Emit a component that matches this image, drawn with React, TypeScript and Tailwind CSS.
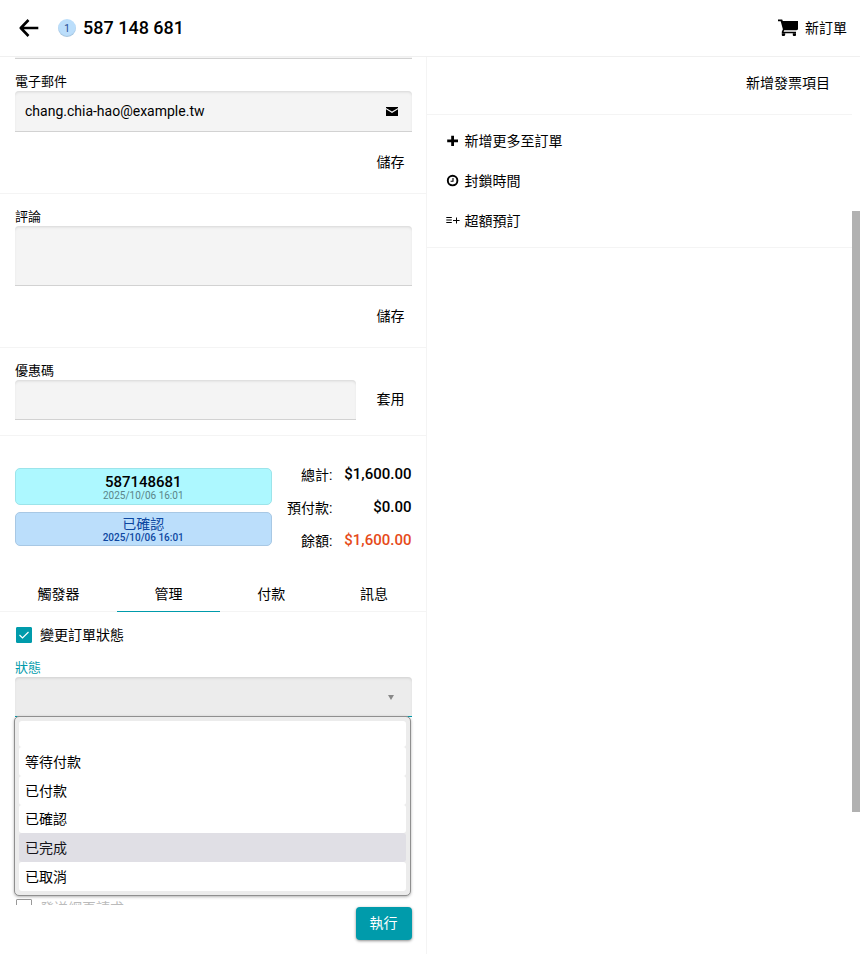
import { useState } from 'react';
import type { ReactNode } from 'react';

const fieldClass =
  'block w-full rounded-t border-b border-[#d2d2d2] bg-[#f4f4f4] px-[10px] text-sm text-black shadow-[inset_0_2px_3px_-1px_rgba(0,0,0,0.12)] outline-none';

const statuses = ['', '等待付款', '已付款', '已確認', '已完成', '已取消'];
const tabs = ['觸發器', '管理', '付款', '訊息'];

function BackIcon() {
  return (
    <svg width="20" height="18" viewBox="0 0 20 18" fill="none" stroke="currentColor" strokeWidth="2.6" aria-hidden="true">
      <path d="M19.3 9H2M9.5 1 1.8 9l7.7 8" strokeLinejoin="round" />
    </svg>
  );
}

function CartIcon() {
  return (
    <svg width="20" height="18" viewBox="0 0 20 18" fill="currentColor" aria-hidden="true">
      <path d="M0 .5h4.2L4.8 2H20v8.6l-1.6.6H6.2l-.6 1.6H18v1.5H3.8v-1.6l1.1-2.4L2.7 2.3H0z" />
      <path d="M3.8 14.3h3.4v1.4L6.5 17H4.4l-.6-.8zM14.8 14.3H18v1.9l-.6.8h-2l-.6-.8z" />
    </svg>
  );
}

function MailIcon() {
  return (
    <svg width="12" height="9" viewBox="0 0 12 9" fill="currentColor" aria-hidden="true">
      <path d="M0 0h12v1L6 4.6 0 1zM0 2.3l6 3.6 6-3.6V9H0z" />
    </svg>
  );
}

function PlusIcon() {
  return (
    <svg width="14" height="14" viewBox="0 0 14 14" fill="currentColor" aria-hidden="true">
      <path d="M5.2 1.7h2.8v3.7h4v2.8H8v3.7H5.2V8.2h-4V5.4h4z" />
    </svg>
  );
}

function ClockIcon() {
  return (
    <svg width="14" height="14" viewBox="0 0 14 14" fill="none" stroke="currentColor" aria-hidden="true">
      <circle cx="6.6" cy="6.6" r="4.8" strokeWidth="1.9" />
      <path d="M7 4v3.2H4.6" strokeWidth="1.1" />
    </svg>
  );
}

function ListPlusIcon() {
  return (
    <svg width="14" height="14" viewBox="0 0 14 14" fill="none" stroke="currentColor" strokeWidth="1" aria-hidden="true">
      <path d="M.3 3.5h5.5M.3 6h5.5M.3 8.5h5.5M7 6.5h6.6M10.5 3.5v6" />
    </svg>
  );
}

function Label({ htmlFor, children, className = '' }: { htmlFor: string; children: ReactNode; className?: string }) {
  return (
    <label htmlFor={htmlFor} className={`block h-5 text-[13px] leading-[22px] ${className}`}>
      {children}
    </label>
  );
}

function TextButton({ children }: { children: ReactNode }) {
  return (
    <button type="button" className="h-8 px-[7px] text-sm">
      {children}
    </button>
  );
}

function Action({ icon, children }: { icon: ReactNode; children: ReactNode }) {
  return (
    <button type="button" className="flex h-10 items-center gap-[5px] text-sm">
      {icon}
      <span>{children}</span>
    </button>
  );
}

function Total({ name, value, className = '' }: { name: string; value: string; className?: string }) {
  return (
    <div className="flex h-[33px] items-center justify-end">
      <dt className="text-sm">{name}:</dt>
      <dd className={`w-[79px] text-right text-[15px] font-medium ${className}`}>{value}</dd>
    </div>
  );
}

function StatusSelect() {
  const [value, setValue] = useState('');
  return (
    <div className="relative">
      <select
        id="status"
        value={value}
        onChange={(e) => setValue(e.target.value)}
        className="block h-10 w-full appearance-none rounded-t border-b border-[#009bab] bg-[#ececec] px-[10px] text-sm shadow-[inset_0_2px_3px_-1px_rgba(0,0,0,0.12)] outline-none"
      >
        {statuses.map((s) => (
          <option key={s} value={s}>
            {s}
          </option>
        ))}
      </select>
      <svg className="pointer-events-none absolute top-[18px] right-[18px]" width="6" height="5" viewBox="0 0 6 5" aria-hidden="true">
        <path d="M0 0h6L3 5z" fill="#888" />
      </svg>
      <ul
        role="listbox"
        aria-label="狀態"
        className="absolute top-[39px] right-px -left-px z-10 rounded-[5px] border border-[#8f8f8f] bg-[#ececec] p-1 text-sm shadow-[0_1px_3px_rgba(0,0,0,0.3)]"
      >
        {statuses.map((s) => (
          <li
            key={s}
            role="option"
            aria-selected={s === value}
            onClick={() => setValue(s)}
            className={`flex items-center rounded-[3px] px-[6px] first:h-[26px] ${s === '已確認' ? 'h-7' : 'h-[29px]'} ${
              s === '已完成' ? 'bg-[#e0dfe5] text-[#15141a]' : 'bg-white'
            }`}
          >
            {s}
          </li>
        ))}
      </ul>
    </div>
  );
}

export default function App() {
  const [note, setNote] = useState('');
  const [change, setChange] = useState(true);
  return (
    <div className="flex min-h-screen flex-col bg-white font-[Roboto,'Noto_Sans_CJK_TC',sans-serif] text-black">
      <header className="flex h-[57px] items-center border-b border-[#f0f0f0] pr-[13px] pl-[19px]">
        <button type="button" aria-label="返回">
          <BackIcon />
        </button>
        <span className="ml-[19px] flex size-[18px] items-center justify-center rounded-full bg-[#bbdefb] text-[10px] text-[#1b4a8f] shadow-[inset_0_-1px_1px_rgba(0,0,0,0.12)]">
          1
        </span>
        <h1 className="ml-[7px] text-lg font-medium">587 148 681</h1>
        <button type="button" className="ml-auto flex items-center gap-[7px] text-sm">
          <CartIcon />
          新訂單
        </button>
      </header>

      <div className="flex flex-1">
        <main className="flex min-w-0 flex-1 flex-col">
          <div className="mr-[14px] ml-[15px] h-[2px] border-b border-[#d2d2d2] bg-[#f4f4f4]" />

          <section className="border-b border-[#f4f4f4] pt-3 pr-[14px] pb-[15px] pl-[15px]">
            <Label htmlFor="email">電子郵件</Label>
            <div className="relative">
              <input id="email" type="email" defaultValue="chang.chia-hao@example.tw" className={`${fieldClass} h-[41px]`} />
              <span className="pointer-events-none absolute top-4 right-[14px]">
                <MailIcon />
              </span>
            </div>
            <div className="mt-[14px] flex justify-end">
              <TextButton>儲存</TextButton>
            </div>
          </section>

          <section className="border-b border-[#f4f4f4] pt-3 pr-[14px] pb-[15px] pl-[15px]">
            <Label htmlFor="note">評論</Label>
            <textarea
              id="note"
              value={note}
              onChange={(e) => setNote(e.target.value)}
              className={`${fieldClass} h-[60px] resize-none py-2`}
            />
            <div className="mt-[14px] flex justify-end">
              <TextButton>儲存</TextButton>
            </div>
          </section>

          <section className="border-b border-[#f4f4f4] pt-3 pr-[14px] pb-[15px] pl-[15px]">
            <Label htmlFor="coupon">優惠碼</Label>
            <div className="flex items-start">
              <div className="min-w-0 flex-1">
                <input id="coupon" type="text" className={`${fieldClass} h-10`} />
              </div>
              <div className="ml-[14px] pt-[3px]">
                <TextButton>套用</TextButton>
              </div>
            </div>
          </section>

          <section className="flex pt-[22px] pr-[14px] pl-[15px]">
            <div className="flex min-w-0 flex-1 flex-col gap-[7px] pt-[10px] text-center">
              <div className="flex h-[37px] flex-col justify-center rounded-[5px] border border-[#9ce4ea] bg-[#adf8ff] pt-[2px]">
                <b className="text-[15px] leading-4 font-medium">587148681</b>
                <span className="text-[10px] leading-3 text-[#5b8488]">2025/10/06 16:01</span>
              </div>
              <div className="flex h-[34px] flex-col justify-center rounded-[5px] border border-[#a8c8e4] bg-[#bbdefb] pt-[2px] text-[#0d47a1]">
                <b className="text-sm leading-4 font-normal">已確認</b>
                <span className="text-[10px] leading-3 font-medium">2025/10/06 16:01</span>
              </div>
            </div>
            <dl className="w-[140px]">
              <Total name="總計" value="$1,600.00" />
              <Total name="預付款" value="$0.00" />
              <Total name="餘額" value="$1,600.00" className="text-[#e64a19]" />
            </dl>
          </section>

          <nav role="tablist" className="mt-[19px] grid grid-cols-[117px_1fr_1fr_1fr] border-b border-[#f4f4f4]">
            {tabs.map((t) => (
              <button
                key={t}
                type="button"
                role="tab"
                aria-selected={t === '管理'}
                className={`-mb-px h-9 border-b text-sm ${t === '管理' ? 'border-[#009bab]' : 'border-transparent'}`}
              >
                {t}
              </button>
            ))}
          </nav>

          <section className="pt-[13px] pr-[14px] pl-[15px]">
            <div className="flex h-5 items-center pl-px">
              <span className="relative flex size-4">
                <input
                  id="change"
                  type="checkbox"
                  checked={change}
                  onChange={(e) => setChange(e.target.checked)}
                  className="size-4 appearance-none rounded-[1px] border border-[#777] checked:border-[#009bab] checked:bg-[#009bab]"
                />
                <svg className="pointer-events-none absolute inset-0" width="16" height="16" viewBox="0 0 16 16" fill="none" stroke="#fff" strokeWidth="1.2" aria-hidden="true">
                  <path d="m3.5 8 3 3 6-6" />
                </svg>
              </span>
              <label htmlFor="change" className="ml-2 text-sm leading-[22px]">
                變更訂單狀態
              </label>
            </div>
            <Label htmlFor="status" className="mt-3 text-[#009bab]">
              狀態
            </Label>
            <StatusSelect />
            <div className="mt-[182px] flex h-[6px] items-start overflow-hidden pl-px">
              <input id="request" type="checkbox" className="size-4 shrink-0 appearance-none rounded-[1px] border border-[#999]" />
              <label htmlFor="request" className="ml-2 text-sm leading-[18px] text-[#bbb]">
                發送網頁請求
              </label>
            </div>
            <div className="mt-[2px] flex justify-end">
              <button type="button" className="h-[33px] rounded bg-[#009bab] px-[14px] pb-px text-sm text-white shadow-[0_1px_3px_rgba(0,0,0,0.45)]">
                執行
              </button>
            </div>
          </section>
        </main>

        <aside className="min-w-0 flex-1 border-l border-[#f4f4f4]">
          <div className="flex h-[58px] items-start justify-end border-b border-[#f4f4f4] px-[15px] pt-[10px]">
            <TextButton>新增發票項目</TextButton>
          </div>
          <div className="border-b border-[#f4f4f4] px-[19px] pt-[6px] pb-[6px]">
            <Action icon={<PlusIcon />}>新增更多至訂單</Action>
            <Action icon={<ClockIcon />}>封鎖時間</Action>
            <Action icon={<ListPlusIcon />}>超額預訂</Action>
          </div>
        </aside>

        <div className="w-2 pt-[154px]" aria-hidden="true">
          <div className="h-[601px] bg-[#b1b1b1]" />
        </div>
      </div>
    </div>
  );
}
